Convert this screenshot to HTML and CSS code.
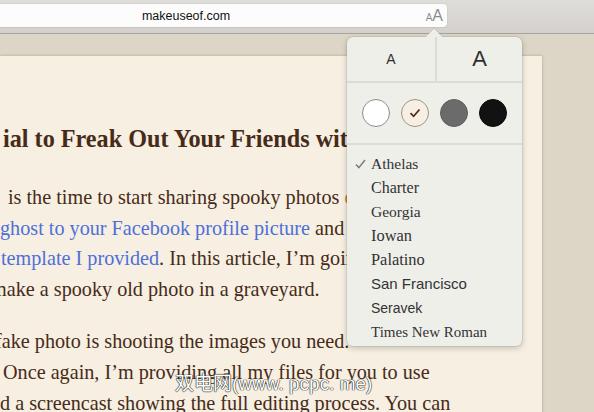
FILE: index.html
```html
<!DOCTYPE html>
<html lang="en">
<head>
  <meta charset="UTF-8">
  <title>Reader</title>
  <link rel="stylesheet" href="styles.css">
</head>
<body>
  <!-- Toolbar -->
  <div class="toolbar">
    <div class="address">
      <span></span>
      <span class="url">makeuseof.com</span>
      <span class="aa"><span class="aa-small">A</span><span class="aa-big">A</span></span>
    </div>
  </div>

  <div class="reader">
    <div class="page">
      <article class="article">
        <h1 class="title">ial to Freak Out Your Friends with</h1>
        <p class="para">
          <span class="line l1">is the time to start sharing spooky photos <span class="hl">of</span></span>
          <span class="line l2"><a class="link">ghost to your Facebook profile picture</a> and</span>
          <span class="line l3"><a class="link">template I provided</a>. In this article, I’m going</span>
          <span class="line l4">make a spooky old photo in a graveyard.</span>
        </p>
        <p class="para">
          <span class="line l5">fake photo is shooting the images you need.</span>
          <span class="line l6">Once again, I’m providing all my files for you to use</span>
          <span class="line l7">and a screencast showing the full editing process. You can</span>
        </p>
      </article>
    </div>
  </div>

  <!-- Appearance popover -->
  <div class="popover">
    <div class="size-row">
      <div class="size-btn small">A</div>
      <div class="size-btn big">A</div>
    </div>
    <div class="theme-row">
      <span class="swatch white"></span>
      <span class="swatch sepia">
        <svg width="12" height="10" viewBox="0 0 12 10"><path d="M1.5 5.2 L4.6 8.3 L10.5 1.5" fill="none" stroke="#4a2f1c" stroke-width="1.8"/></svg>
      </span>
      <span class="swatch gray"></span>
      <span class="swatch night"></span>
    </div>
    <ul class="fonts">
      <li class="font f-athelas">
        <svg class="check" width="11" height="10" viewBox="0 0 11 10"><path d="M1 5.4 L3.9 8.6 L10 1" fill="none" stroke="#7a7a7a" stroke-width="1.5"/></svg>
        Athelas
      </li>
      <li class="font f-charter">Charter</li>
      <li class="font f-georgia">Georgia</li>
      <li class="font f-iowan">Iowan</li>
      <li class="font f-palatino">Palatino</li>
      <li class="font f-sf">San Francisco</li>
      <li class="font f-seravek">Seravek</li>
      <li class="font f-times">Times New Roman</li>
    </ul>
  </div>

  <div class="watermark">双电网(www. pcpc. me)</div>
</body>
</html>
```

FILE: styles.css
```css
html, body {
  margin: 0;
  padding: 0;
}

body {
  position: relative;
  width: 594px;
  height: 412px;
  overflow: hidden;
  background: #ddd6c6;
  font-family: "Liberation Serif", serif;
}

/* Toolbar */
.toolbar {
  box-sizing: border-box;
  height: 34px;
  padding-top: 4px;
  background: linear-gradient(#dfddda, #d3d0cd);
  border-bottom: 1px solid #a6a4a1;
}

.address {
  display: grid;
  grid-template-columns: 1fr auto 1fr;
  align-items: center;
  width: 522px;
  height: 23px;
  margin-left: -75px;
  background: #fcfcfc;
  border-radius: 4px;
  box-shadow: 0 0 0 0.5px #cbc9c6, 0 1px 0 #c4c2bf;
}

.url {
  font-family: "Liberation Sans", sans-serif;
  font-size: 12.5px;
  color: #111;
}

.aa {
  justify-self: end;
  padding-right: 4px;
  color: #8c8c8c;
  font-family: "Liberation Sans", sans-serif;
}

.aa-small { font-size: 10px; }
.aa-big { font-size: 16px; }

/* Reader page */
.reader {
  display: flex;
  padding-top: 22px;
}

.page {
  width: 542px;
  height: 360px;
  overflow: hidden;
  background: #f6efe2;
  box-shadow: 0 0 3px rgba(0, 0, 0, 0.22);
}

.article {
  padding-top: 67px;
  color: #472b18;
}

.title {
  margin: 0 0 27px 3px;
  font-size: 24.2px;
  line-height: 32px;
  font-weight: bold;
  white-space: nowrap;
}

.para {
  margin: 0 0 22px;
  font-size: 20.2px;
  line-height: 30.6px;
}

.line {
  display: block;
  white-space: nowrap;
}

.l1 { margin-left: 8px; }
.l2 { margin-left: 0; }
.l3 { margin-left: 1px; }
.l4 { margin-left: -9px; }
.l5 { margin-left: -5px; }
.l6 { margin-left: 3px; }
.l7 { margin-left: -19px; }

.link { color: #4f6fd8; }
.hl { color: #c87a2a; }

/* Popover */
.popover {
  position: absolute;
  left: 347px;
  top: 37px;
  width: 175px;
  height: 309px;
  background: #efefea;
  border-radius: 6px;
  box-shadow: 0 0 0 0.5px rgba(0, 0, 0, 0.12), 0 2px 6px rgba(0, 0, 0, 0.22);
}

.popover::before {
  content: "";
  position: absolute;
  left: 81px;
  top: -6px;
  width: 12px;
  height: 12px;
  background: #efefea;
  transform: rotate(45deg);
  box-shadow: -0.5px -0.5px 0 rgba(0, 0, 0, 0.12);
}

.size-row {
  position: relative;
  display: flex;
  height: 44px;
  border-bottom: 2px solid #dcdcd6;
}

.size-btn {
  display: flex;
  align-items: center;
  justify-content: center;
  color: #2f2f2f;
  font-family: "Liberation Sans", sans-serif;
}

.size-btn.small {
  width: 88px;
  font-size: 14px;
  border-right: 2px solid #dcdcd6;
}

.size-btn.big {
  flex: 1;
  font-size: 22px;
}

.theme-row {
  display: flex;
  justify-content: center;
  align-items: center;
  gap: 11px;
  height: 60px;
  border-bottom: 2px solid #dcdcd6;
}

.swatch {
  box-sizing: border-box;
  display: flex;
  align-items: center;
  justify-content: center;
  width: 28px;
  height: 28px;
  border-radius: 50%;
}

.swatch.white { background: #fff; border: 1px solid #8d8d8d; }
.swatch.sepia { background: #f7efe2; border: 1px solid #9b9487; }
.swatch.gray { background: #6b6b6b; border: 1px solid #5e5e5e; }
.swatch.night { background: #121212; border: 1px solid #0a0a0a; }

.fonts {
  list-style: none;
  margin: 0;
  padding: 7px 0 0;
}

.font {
  position: relative;
  height: 24px;
  line-height: 24px;
  padding-left: 24px;
  color: #333;
  font-family: "Liberation Serif", serif;
  font-size: 15.5px;
}

.check {
  position: absolute;
  left: 8px;
  top: 7px;
}

.f-charter { font-size: 16px; }
.f-iowan { font-size: 16.4px; }
.f-palatino { font-size: 16.4px; }
.f-sf { font-family: "Liberation Sans", sans-serif; font-size: 15px; }
.f-seravek { font-family: "Liberation Sans", sans-serif; font-size: 14px; }
.f-times { font-size: 15px; }

/* Watermark */
.watermark {
  position: absolute;
  left: 175px;
  top: 372px;
  color: #fff;
  font-family: "Liberation Sans", "Noto Sans CJK SC", sans-serif;
  font-size: 19px;
  line-height: 24px;
  text-shadow: 0 0 1px #222, 0 0 1px #222, 0 0 1px #222;
}
```
